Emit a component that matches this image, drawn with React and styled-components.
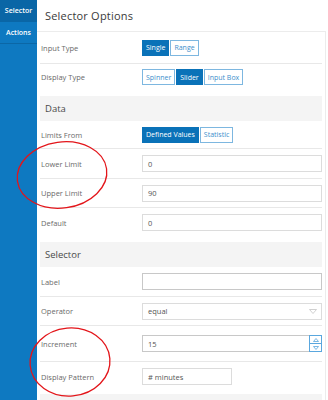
import React from 'react';
import styled, { createGlobalStyle } from 'styled-components';

const GlobalStyle = createGlobalStyle`
  html, body { margin: 0; padding: 0; background: #fff; }
  body { font-family: "Open Sans", "Liberation Sans", sans-serif; }
`;

const Page = styled.div`
  position: relative;
  display: flex;
  width: 328px;
  height: 400px;
  overflow: hidden;
`;

const Sidebar = styled.div`
  width: 37px;
  flex-shrink: 0;
  background: #0e79c1;
  display: flex;
  flex-direction: column;
`;

const Tab = styled.div`
  height: 21px;
  flex-shrink: 0;
  display: flex;
  align-items: center;
  justify-content: center;
  color: #fff;
  font-size: 7px;
  font-weight: 600;
  background: ${p => (p.active ? '#0a66a6' : 'transparent')};
  border-bottom: 1px solid ${p => (p.active ? '#0a66a6' : '#0b67a6')};
`;

const Main = styled.div`
  flex: 1;
  min-width: 0;
  display: flex;
  flex-direction: column;
  padding-right: 2px;
`;

const Header = styled.div`
  height: 31px;
  flex-shrink: 0;
  display: flex;
  align-items: center;
  padding-left: 8px;
  font-size: 11px;
  letter-spacing: 0.2px;
  color: #3a3a3a;
  font-weight: 500;
`;

const Panel = styled.div`
  flex: 1;
  min-height: 0;
  border-top: 1px solid #ececec;
  border-right: 1px solid #ececec;
  padding: 0 3px;
`;

const Row = styled.div`
  height: ${p => p.h}px;
  display: flex;
  align-items: center;
  border-bottom: ${p => (p.line ? '1px solid #e8e8e8' : 'none')};
  padding-left: 1px;
`;

const Label = styled.div`
  width: 101px;
  flex-shrink: 0;
  font-size: 7.5px;
  color: #6a6a6a;
`;

const Section = styled.div`
  height: 25px;
  margin-top: ${p => p.mt}px;
  background: #f4f4f4;
  display: flex;
  align-items: center;
  padding-left: 5px;
  font-size: 9.5px;
  color: #4a4a4a;
`;

const Group = styled.div`
  display: flex;
  gap: 1px;
`;

const SegButton = styled.div`
  height: 14px;
  padding: 0 3px;
  display: flex;
  align-items: center;
  font-size: 7px;
  color: ${p => (p.active ? '#fff' : '#3d8fcc')};
  background: ${p => (p.active ? '#0a72b8' : '#fff')};
  border: 1px solid ${p => (p.active ? '#0a72b8' : '#7db7e0')};
`;

const Field = styled.div`
  position: relative;
  height: 15px;
  width: ${p => p.w || 173}px;
  border: 1px solid ${p => (p.dark ? '#c8c8c8' : '#dcdcdc')};
  display: flex;
  align-items: center;
  padding-left: 5px;
  font-size: 7.5px;
  color: #555;
  box-sizing: content-box;
`;

const Caret = styled.svg`
  position: absolute;
  right: 4px;
  top: 5px;
`;

const Spin = styled.div`
  position: absolute;
  right: -1px;
  top: -1px;
  bottom: -1px;
  width: 13px;
  display: flex;
  flex-direction: column;
`;

const SpinBtn = styled.div`
  flex: 1;
  border: 1px solid #5aa7de;
  margin-top: ${p => (p.second ? '-1px' : '0')};
  display: flex;
  align-items: center;
  justify-content: center;
  background: #fff;
`;

const Overlay = styled.svg`
  position: absolute;
  left: 0;
  top: 0;
  pointer-events: none;
`;

const Tri = ({ up }) => (
  <svg width="6" height="4" viewBox="0 0 6 4">
    <path d={up ? 'M0.5 3.5 L3 0.5 L5.5 3.5 Z' : 'M0.5 0.5 L3 3.5 L5.5 0.5 Z'} fill="none" stroke="#5aa7de" strokeWidth="0.8" />
  </svg>
);

export default function App() {
  return (
    <Page>
      <GlobalStyle />
      <Sidebar>
        <Tab active>Selector</Tab>
        <Tab>Actions</Tab>
      </Sidebar>
      <Main>
        <Header>Selector Options</Header>
        <Panel>
          <Row h={31} line>
            <Label>Input Type</Label>
            <Group>
              <SegButton active>Single</SegButton>
              <SegButton>Range</SegButton>
            </Group>
          </Row>
          <Row h={26}>
            <Label>Display Type</Label>
            <Group>
              <SegButton>Spinner</SegButton>
              <SegButton active>Slider</SegButton>
              <SegButton>Input Box</SegButton>
            </Group>
          </Row>
          <Section mt={6}>Data</Section>
          <Row h={27} line>
            <Label>Limits From</Label>
            <Group>
              <SegButton active>Defined Values</SegButton>
              <SegButton>Statistic</SegButton>
            </Group>
          </Row>
          <Row h={29} line>
            <Label>Lower Limit</Label>
            <Field>0</Field>
          </Row>
          <Row h={28} line>
            <Label>Upper Limit</Label>
            <Field>90</Field>
          </Row>
          <Row h={29}>
            <Label>Default</Label>
            <Field>0</Field>
          </Row>
          <Section mt={5}>Selector</Section>
          <Row h={29} line>
            <Label>Label</Label>
            <Field dark />
          </Row>
          <Row h={28} line>
            <Label>Operator</Label>
            <Field>
              equal
              <Caret width="8" height="5" viewBox="0 0 8 5">
                <path d="M0.5 0.5 L4 4.5 L7.5 0.5 Z" fill="none" stroke="#c4c4c4" strokeWidth="0.8" />
              </Caret>
            </Field>
          </Row>
          <Row h={35} line>
            <Label>Increment</Label>
            <Field dark>
              15
              <Spin>
                <SpinBtn><Tri up /></SpinBtn>
                <SpinBtn second><Tri /></SpinBtn>
              </Spin>
            </Field>
          </Row>
          <Row h={29}>
            <Label>Display Pattern</Label>
            <Field w={83}># minutes</Field>
          </Row>
          <Section mt={3} />
        </Panel>
      </Main>
      <Overlay width="328" height="400" viewBox="0 0 328 400">
        <ellipse cx="62" cy="175" rx="45" ry="33" fill="none" stroke="#e3151a" strokeWidth="1.3" transform="rotate(-8 62 175)" />
        <ellipse cx="70" cy="362" rx="40" ry="34" fill="none" stroke="#e3151a" strokeWidth="1.3" transform="rotate(-5 70 362)" />
      </Overlay>
    </Page>
  );
}
